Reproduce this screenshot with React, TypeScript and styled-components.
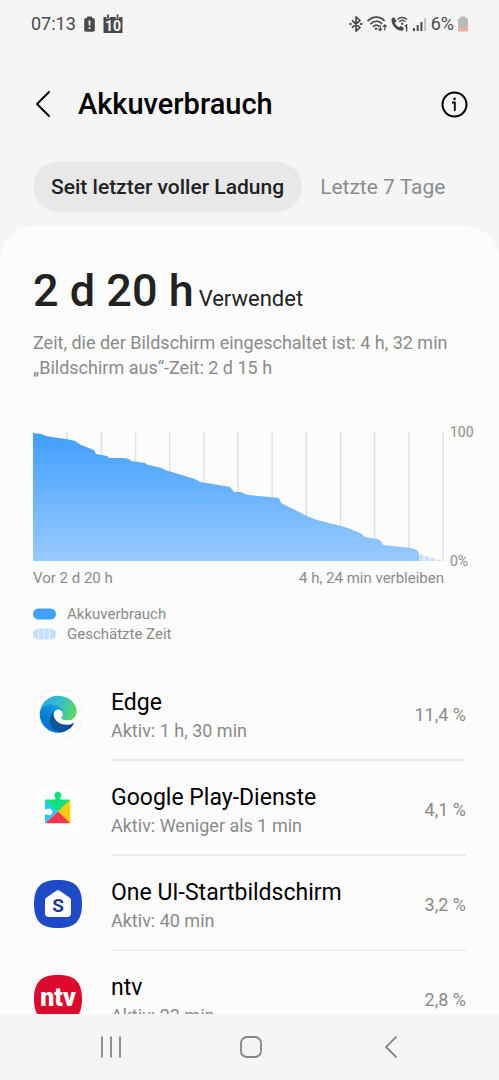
import React from "react";
import styled, { createGlobalStyle } from "styled-components";

const GlobalStyle = createGlobalStyle`
  *, *::before, *::after { box-sizing: border-box; }
  body {
    margin: 0;
    background: #f5f5f5;
    font-family: Roboto, "Noto Sans", sans-serif;
    color: #000;
  }
  button { font: inherit; color: inherit; background: none; border: 0; padding: 0; cursor: pointer; }
  h1, h2, h3, p, ul { margin: 0; padding: 0; }
  svg { display: block; flex: none; }
`;

const Screen = styled.div`
  height: 100vh;
  display: flex;
  flex-direction: column;
  overflow: hidden;
`;

const StatusBar = styled.div`
  flex: none;
  height: 48px;
  padding: 0 31px;
  display: flex;
  align-items: center;
  justify-content: space-between;
  color: #4a4a4a;
  font-size: 18px;
  line-height: 24px;
`;

const StatusGroup = styled.div<{ $gap: number }>`
  display: flex;
  align-items: center;
  gap: ${(p) => p.$gap}px;
`;

const Header = styled.header`
  flex: none;
  height: 112px;
  padding: 0 31px 0 30px;
  display: flex;
  align-items: center;
`;

const IconButton = styled.button`
  display: flex;
  align-items: center;
  justify-content: center;
`;

const Title = styled.h1`
  flex: 1;
  margin-left: 22px;
  font-size: 29px;
  font-weight: 500;
  line-height: 36px;
`;

const Tabs = styled.div`
  flex: none;
  display: flex;
  padding: 2px 33px 14px;
`;

const Tab = styled.button<{ $active?: boolean }>`
  height: 50px;
  padding: 0 18px;
  border-radius: 25px;
  font-size: 21px;
  white-space: nowrap;
  font-weight: ${(p) => (p.$active ? 500 : 400)};
  color: ${(p) => (p.$active ? "#222" : "#8c8c8c")};
  background: ${(p) => (p.$active ? "#e8e8e8" : "transparent")};
`;

const Panel = styled.main`
  flex: 1;
  min-height: 0;
  overflow: hidden;
  background: #fcfcfc;
  border-radius: 34px 34px 0 0;
  padding: 37px 33px 0;
`;

const Usage = styled.h2`
  display: flex;
  align-items: baseline;
  gap: 5px;
  font-size: 45px;
  font-weight: 500;
  line-height: 56px;
  color: #222;
`;

const UsageSuffix = styled.span`
  font-size: 22px;
  font-weight: 400;
`;

const Summary = styled.p`
  margin-top: 3px;
  font-size: 18px;
  line-height: 25px;
  color: #8a8a8a;
`;

const Chart = styled.figure`
  margin: 52px -8px 0 0;
  display: grid;
  grid-template-columns: 1fr 24px;
  column-gap: 6px;
  font-size: 14px;
  line-height: 16px;
  color: #8a8a8a;
`;

const Plot = styled.svg`
  width: 100%;
  height: 129px;
`;

const Scale = styled.div`
  display: flex;
  flex-direction: column;
  justify-content: space-between;
  margin: -8px 0;
`;

const Range = styled.figcaption`
  display: flex;
  justify-content: space-between;
  margin-top: 7px;
  font-size: 15px;
  line-height: 20px;
`;

const Legend = styled.ul`
  list-style: none;
  margin-top: 16px;
  font-size: 15px;
  line-height: 20px;
  color: #8a8a8a;
`;

const LegendItem = styled.li`
  display: flex;
  align-items: center;
  gap: 11px;
`;

const AppList = styled.ul`
  list-style: none;
  margin-top: 22px;
`;

const AppRow = styled.li`
  display: flex;
  gap: 29px;
`;

const AppIcon = styled.div`
  padding: 24px 0 0 1px;
`;

const AppBody = styled.div`
  flex: 1;
  height: 95px;
  padding-top: 5px;
  display: flex;
  align-items: center;
  justify-content: space-between;
  border-bottom: 2px solid #ececec;
`;

const AppName = styled.h3`
  font-size: 23px;
  font-weight: 400;
  line-height: 30px;
`;

const AppDetail = styled.p`
  font-size: 18px;
  line-height: 25px;
  color: #8a8a8a;
`;

const Percent = styled.span`
  font-size: 18px;
  line-height: 24px;
  color: #8a8a8a;
`;

const NavBar = styled.nav`
  flex: none;
  height: 66px;
  padding: 0 38px 0 41px;
  display: grid;
  grid-template-columns: repeat(3, 1fr);
`;

const BatteryAlertIcon = () => (
  <svg width="11" height="18" viewBox="0 0 11 18">
    <path d="M3 1.500h5V3h1a1.800 1.800 0 0 1 1.800 1.800V15A1.800 1.800 0 0 1 9 16.800H2A1.800 1.800 0 0 1 .2 15V4.800A1.800 1.800 0 0 1 2 3h1z" fill="#4a4a4a" />
    <path d="M4.500 5.500h2l-.3 5.200H4.800z" fill="#f5f5f5" />
    <circle cx="5.500" cy="13" r="1.100" fill="#f5f5f5" />
  </svg>
);

const CalendarIcon = () => (
  <svg width="20" height="20" viewBox="0 0 20 20">
    <path d="M.5 3h19v16H.5z" fill="#4a4a4a" />
    <path d="M5 1.200v3.300M14.500 1.200v3.300" stroke="#f5f5f5" strokeWidth="3.400" />
    <path d="M5 1.200v2.300M14.500 1.200v2.300" stroke="#4a4a4a" strokeWidth="1.800" strokeLinecap="round" />
    <text x="10" y="17" textAnchor="middle" fontFamily="Roboto, sans-serif" fontSize="14" fontWeight="700" fill="#f5f5f5">10</text>
  </svg>
);

const BluetoothIcon = () => (
  <svg width="14" height="18" viewBox="0 0 14 18" fill="none" stroke="#4a4a4a" strokeWidth="1.700" strokeLinejoin="round">
    <path d="M3 5.300l8 7.200-4 3.700V1.800l4 3.700-8 7.200" />
    <circle cx="1.500" cy="9" r="1.200" fill="#4a4a4a" stroke="none" />
    <circle cx="12.300" cy="9" r="1.200" fill="#4a4a4a" stroke="none" />
  </svg>
);

const WifiIcon = () => (
  <svg width="20" height="18" viewBox="0 0 20 18" fill="none" stroke="#4a4a4a" strokeWidth="1.700">
    <path d="M.6 6.200C5.500 .8 13 .8 17.600 6" />
    <path d="M3.300 9.100c3.600-3.800 8.400-3.800 11.800-.2" />
    <path d="M6 11.800c2-2 4.400-2 6.300-.3" />
    <circle cx="9" cy="13.800" r="1.300" fill="#4a4a4a" stroke="none" />
    <path d="M13.200 10v5.500M11.300 13.700l1.900 2 1.900-2M17.800 15.500v-5.500M15.900 11.900l1.900-2 1.900 2" strokeWidth="1.200" />
  </svg>
);

const WifiCallIcon = () => (
  <svg width="18" height="18" viewBox="0 0 18 18" fill="none" stroke="#4a4a4a" strokeWidth="1.400">
    <path d="M.6 3.300L3 2.200l2.600 3.700-1.700 2c.9 2 2.300 3.400 4.300 4.400l2-1.500 2.800 2.700-1.300 2.200C7 16.800-.5 10.500.6 3.300z" fill="#4a4a4a" stroke="none" />
    <path d="M6.500 4.500c2.500-2.700 6.500-2.700 9.500 0M8.200 6.700c1.800-1.700 4.300-1.700 6.200 0" />
    <circle cx="11.300" cy="8.700" r="1.200" fill="#4a4a4a" stroke="none" />
    <path d="M13.700 11.300l1.900-1.200v6.400" />
  </svg>
);

const SignalIcon = () => (
  <svg width="14" height="18" viewBox="0 0 14 18">
    <path d="M0 13h2v3H0zM3.700 10h2v6h-2zM7.400 7h2v9h-2z" fill="#4a4a4a" />
    <path d="M11.100 3h2v13h-2z" fill="#c4c4c4" />
  </svg>
);

const BatteryIcon = () => (
  <svg width="10" height="18" viewBox="0 0 10 18">
    <path d="M2.500 1.500h5V3h1A1.500 1.500 0 0 1 10 4.500V13H0V4.500A1.500 1.500 0 0 1 1.500 3h1z" fill="#b9bcbd" />
    <path d="M0 12.500h10V15a1.500 1.500 0 0 1-1.500 1.500h-7A1.500 1.500 0 0 1 0 15z" fill="#f2ab94" />
  </svg>
);

const SQUIRCLE = "M24 0C41 0 48 7 48 24S41 48 24 48 0 41 0 24 7 0 24 0z";

const EdgeIcon = () => (
  <svg width="48" height="48" viewBox="0 0 48 48">
    <defs>
      <linearGradient id="edgeDeep" x1="63" y1="177" x2="241" y2="177" gradientUnits="userSpaceOnUse">
        <stop offset="0" stopColor="#0c59a4" />
        <stop offset="1" stopColor="#114a8b" />
      </linearGradient>
      <linearGradient id="edgeBlue" x1="157" y1="100" x2="46" y2="221" gradientUnits="userSpaceOnUse">
        <stop offset="0" stopColor="#1b9de2" />
        <stop offset="0.160" stopColor="#1595df" />
        <stop offset="0.670" stopColor="#0680d7" />
        <stop offset="1" stopColor="#0078d4" />
      </linearGradient>
      <linearGradient id="edgeGreen" x1="20" y1="60" x2="245" y2="140" gradientUnits="userSpaceOnUse">
        <stop offset="0" stopColor="#2fa9dc" />
        <stop offset="0.450" stopColor="#35bcd0" />
        <stop offset="0.750" stopColor="#45cc95" />
        <stop offset="1" stopColor="#62d957" />
      </linearGradient>
    </defs>
    <path d={SQUIRCLE} fill="#fff" stroke="#ececec" strokeWidth="0.800" />
    <g transform="translate(5 5) scale(.1445)">
      <path fill="url(#edgeDeep)" d="M235.680 195.460a93.730 93.730 0 0 1-10.540 4.710 101.870 101.870 0 0 1-35.900 6.460c-47.320 0-88.540-32.550-88.540-74.320A31.480 31.480 0 0 1 117.130 105.040c-42.800 1.800-53.800 46.400-53.800 72.530 0 73.880 68.090 81.370 82.760 81.370 7.910 0 19.840-2.300 27-4.560l1.310-.44a128.340 128.340 0 0 0 66.600-52.800 4 4 0 0 0-5.320-5.680z" />
      <path fill="url(#edgeBlue)" d="M110.340 246.340A79.200 79.200 0 0 1 87.600 225a80.720 80.720 0 0 1 29.530-120c3.120-1.470 8.450-4.130 15.540-4a32.350 32.350 0 0 1 25.690 13 31.880 31.880 0 0 1 6.360 18.660c0-.21 24.460-79.600-80-79.600-43.900 0-80 41.660-80 78.210a130.150 130.150 0 0 0 12.110 56 128 128 0 0 0 156.380 67.110 75.550 75.550 0 0 1-62.780-8z" />
      <path fill="url(#edgeGreen)" d="M156.940 153.780c-.81 1.050-3.300 2.500-3.300 5.660 0 2.610 1.700 5.120 4.720 7.230 14.380 10 41.490 8.680 41.560 8.680a59.560 59.560 0 0 0 30.270-8.350 61.380 61.380 0 0 0 30.430-52.880c.26-22.410-8-37.310-11.340-43.910C228.090 28.760 182.350 4.920 132.610 4.920a128 128 0 0 0-128 126.200c.48-36.540 36.800-66.050 80-66.050 3.500 0 23.460.34 42 10.070 16.340 8.580 24.900 18.940 30.850 29.210 6.180 10.670 7.280 24.150 7.280 29.520s-2.740 13.330-7.800 19.910z" />
    </g>
  </svg>
);

const PlayServicesIcon = () => (
  <svg width="48" height="48" viewBox="0 0 48 48">
    <path d={SQUIRCLE} fill="#fff" stroke="#fafafa" strokeWidth="0.800" />
    <clipPath id="puzzle">
      <path d="M12.500 14.500h8.800v-2a3.400 3.400 0 1 1 5 0v2h8.700A1.500 1.500 0 0 1 36.500 16v21a1.500 1.500 0 0 1-1.500 1.500H12.500A1.500 1.500 0 0 1 11 37v-7.600h2.300a3.200 3.200 0 1 0 0-5.200H11V16a1.500 1.500 0 0 1 1.500-1.500z" />
    </clipPath>
    <g clipPath="url(#puzzle)">
      <path d="M11 14.500L24 26.500 11 38.500z" fill="#28c8f0" />
      <path d="M10 14.500V5h28v9.500L24 26.500z" fill="#0ee37a" />
      <path d="M36.500 14.500V38.500L24 26.500z" fill="#ffcb05" />
      <path d="M11 38.500L24 26.500l12.500 12z" fill="#f4364a" />
    </g>
  </svg>
);

const OneUiIcon = () => (
  <svg width="48" height="48" viewBox="0 0 48 48">
    <path d={SQUIRCLE} fill="#1f4ac6" />
    <path d="M22.700 10.500a2 2 0 0 1 2.600 0l10.500 7.300a2.600 2.600 0 0 1 1.200 2.200v13a4 4 0 0 1-4 4H15a4 4 0 0 1-4-4V20a2.600 2.600 0 0 1 1.200-2.200z" fill="#fff" />
    <text x="24" y="32" textAnchor="middle" fontFamily="Roboto, sans-serif" fontSize="19" fontWeight="700" fill="#1a3a96">S</text>
  </svg>
);

const NtvIcon = () => (
  <svg width="48" height="48" viewBox="0 0 48 48">
    <path d={SQUIRCLE} fill="#dd0a2d" />
    <text x="24" y="31" textAnchor="middle" fontFamily="Roboto, sans-serif" fontSize="25" fontWeight="900" fill="#fff">ntv</text>
  </svg>
);

const LEVELS: Array<[number, number]> = [
  [0, 1], [8, 2], [13, 4], [25, 6], [33, 7], [42, 9], [48, 13], [61, 18], [63, 22], [74, 24],
  [76, 26], [90, 26], [96, 27], [98, 29], [112, 31], [115, 33], [129, 36], [132, 38], [162, 47],
  [167, 50], [180, 52], [197, 55], [201, 60], [208, 60], [212, 62], [216, 63], [246, 66], [248, 71],
  [266, 80], [274, 84], [284, 88], [296, 91], [308, 94], [315, 96], [329, 102], [332, 105],
  [344, 107], [348, 109], [350, 113], [378, 116], [384, 118], [386, 121],
];

const PLOT_WIDTH = 411;
const PLOT_HEIGHT = 129;
const GRID_LINES = Array.from({ length: 12 }, (_, i) => ((i + 1) * (PLOT_WIDTH - 1)) / 12);

const BatteryPlot = () => (
  <Plot viewBox={`0 0 ${PLOT_WIDTH} ${PLOT_HEIGHT}`} preserveAspectRatio="none" role="img" aria-label="Akkuverbrauch">
    <defs>
      <linearGradient id="level" x1="0" y1="0" x2="0" y2="1">
        <stop offset="0" stopColor="#409fff" />
        <stop offset="1" stopColor="#98caff" />
      </linearGradient>
      <pattern id="estimate" width="6" height="129" patternUnits="userSpaceOnUse">
        <path d="M0 0h6v129H0z" fill="#d9eaff" />
        <path d="M3 0h2v129H3z" fill="#c0dcfc" />
      </pattern>
    </defs>
    {GRID_LINES.map((x) => (
      <path key={x} d={`M${x} 0V${PLOT_HEIGHT}`} stroke="#e0e0e0" strokeWidth="1.400" />
    ))}
    <path d="M386 122L410 129H386z" fill="url(#estimate)" />
    <path d={`M0 ${PLOT_HEIGHT}L${LEVELS.map((p) => p.join(" ")).join("L")}V${PLOT_HEIGHT}z`} fill="url(#level)" />
  </Plot>
);

const Swatch = ({ striped }: { striped?: boolean }) => (
  <svg width="23" height="12" viewBox="0 0 23 12">
    <rect width="23" height="11" y="0.500" rx="5.500" fill={striped ? "#c3dffc" : "#409fff"} />
    {striped && <path d="M5.500 .5v11M11 .5v11M16.500 .5v11" stroke="#e4f1ff" strokeWidth="1.300" />}
  </svg>
);

const APPS = [
  { name: "Edge", detail: "Aktiv: 1 h, 30 min", percent: "11,4 %", Icon: EdgeIcon },
  { name: "Google Play-Dienste", detail: "Aktiv: Weniger als 1 min", percent: "4,1 %", Icon: PlayServicesIcon },
  { name: "One UI-Startbildschirm", detail: "Aktiv: 40 min", percent: "3,2 %", Icon: OneUiIcon },
  { name: "ntv", detail: "Aktiv: 23 min", percent: "2,8 %", Icon: NtvIcon },
];

export default function App() {
  return (
    <Screen>
      <GlobalStyle />
      <StatusBar>
        <StatusGroup $gap={8}>
          <span>07:13</span>
          <BatteryAlertIcon />
          <CalendarIcon />
        </StatusGroup>
        <StatusGroup $gap={4}>
          <BluetoothIcon />
          <WifiIcon />
          <WifiCallIcon />
          <SignalIcon />
          <span>6%</span>
          <BatteryIcon />
        </StatusGroup>
      </StatusBar>

      <Header>
        <IconButton aria-label="Zurück">
          <svg width="26" height="30" viewBox="0 0 26 30" fill="none" stroke="#000" strokeWidth="2" strokeLinecap="round" strokeLinejoin="round">
            <path d="M19 3L7 15l12 12" />
          </svg>
        </IconButton>
        <Title>Akkuverbrauch</Title>
        <IconButton aria-label="Info">
          <svg width="27" height="27" viewBox="0 0 27 27" fill="none" stroke="#000" strokeWidth="2">
            <circle cx="13.500" cy="13.500" r="12" />
            <path d="M11 11.500h2.800v8.500" strokeWidth="1.800" />
            <circle cx="13.500" cy="7.800" r="1.400" fill="#000" stroke="none" />
          </svg>
        </IconButton>
      </Header>

      <Tabs role="tablist">
        <Tab role="tab" aria-selected="true" $active>Seit letzter voller Ladung</Tab>
        <Tab role="tab" aria-selected="false">Letzte 7 Tage</Tab>
      </Tabs>

      <Panel>
        <Usage>
          2 d 20 h <UsageSuffix>Verwendet</UsageSuffix>
        </Usage>
        <Summary>
          Zeit, die der Bildschirm eingeschaltet ist: 4 h, 32 min
          <br />
          „Bildschirm aus“-Zeit: 2 d 15 h
        </Summary>

        <Chart>
          <BatteryPlot />
          <Scale>
            <span>100</span>
            <span>0%</span>
          </Scale>
          <Range>
            <span>Vor 2 d 20 h</span>
            <span>4 h, 24 min verbleiben</span>
          </Range>
        </Chart>

        <Legend>
          <LegendItem><Swatch />Akkuverbrauch</LegendItem>
          <LegendItem><Swatch striped />Geschätzte Zeit</LegendItem>
        </Legend>

        <AppList>
          {APPS.map(({ name, detail, percent, Icon }) => (
            <AppRow key={name}>
              <AppIcon><Icon /></AppIcon>
              <AppBody>
                <div>
                  <AppName>{name}</AppName>
                  <AppDetail>{detail}</AppDetail>
                </div>
                <Percent>{percent}</Percent>
              </AppBody>
            </AppRow>
          ))}
        </AppList>
      </Panel>

      <NavBar>
        <IconButton aria-label="Letzte Apps">
          <svg width="22" height="22" viewBox="0 0 22 22" stroke="#858585" strokeWidth="1.800">
            <path d="M2 .5v21M11 .5v21M20 .5v21" />
          </svg>
        </IconButton>
        <IconButton aria-label="Startseite">
          <svg width="22" height="22" viewBox="0 0 22 22" fill="none" stroke="#858585" strokeWidth="1.800">
            <rect x="1" y="1" width="20" height="20" rx="6" />
          </svg>
        </IconButton>
        <IconButton aria-label="Zurück">
          <svg width="22" height="22" viewBox="0 0 22 22" fill="none" stroke="#858585" strokeWidth="1.800">
            <path d="M16.500 .5L6 11l10.500 10.500" />
          </svg>
        </IconButton>
      </NavBar>
    </Screen>
  );
}
